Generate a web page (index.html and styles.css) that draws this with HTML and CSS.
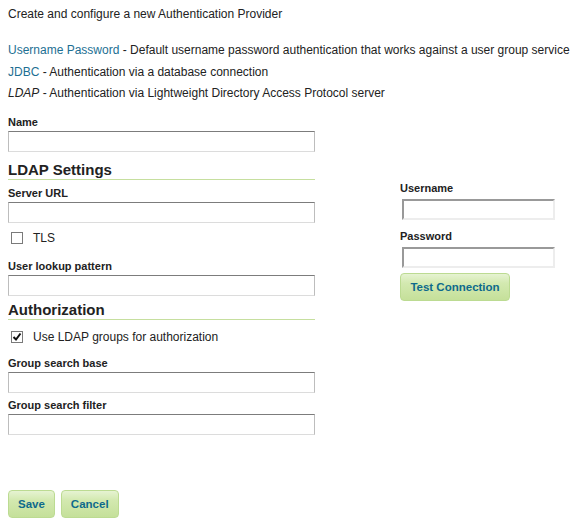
FILE: index.html
```html
<!DOCTYPE html>
<html>
<head>
<meta charset="utf-8">
<link rel="stylesheet" href="styles.css">
</head>
<body>
<div class="page">
  <p class="intro">Create and configure a new Authentication Provider</p>
  <ul class="providers">
    <li><a class="link">Username Password</a> - Default username password authentication that works against a user group service</li>
    <li><a class="link">JDBC</a> - Authentication via a database connection</li>
    <li><em>LDAP</em> - Authentication via Lightweight Directory Access Protocol server</li>
  </ul>

  <div class="field name-field">
    <label class="label">Name</label>
    <input class="text" type="text">
  </div>

  <div class="ldap-row">
    <div class="left-col">
      <h3 class="section">LDAP Settings</h3>
      <div class="field">
        <label class="label">Server URL</label>
        <input class="text" type="text">
      </div>
      <div class="check-row tls-row">
        <span class="box"></span>
        <span>TLS</span>
      </div>
      <div class="field">
        <label class="label">User lookup pattern</label>
        <input class="text" type="text">
      </div>
    </div>
    <div class="right-col">
      <label class="label">Username</label>
      <input class="inset" type="text">
      <label class="label pw-label">Password</label>
      <input class="inset" type="password">
      <button class="btn test-btn">Test Connection</button>
    </div>
  </div>

  <h3 class="section auth-head">Authorization</h3>
  <div class="check-row auth-row">
    <span class="box"><svg width="10" height="10" viewBox="0 0 10 10"><path d="M1.5 5 L4 7.5 L8.5 1.5" fill="none" stroke="#111" stroke-width="2"/></svg></span>
    <span>Use LDAP groups for authorization</span>
  </div>
  <div class="field">
    <label class="label">Group search base</label>
    <input class="text" type="text">
  </div>
  <div class="field">
    <label class="label">Group search filter</label>
    <input class="text" type="text">
  </div>

  <div class="actions">
    <button class="btn">Save</button>
    <button class="btn">Cancel</button>
  </div>
</div>
</body>
</html>
```

FILE: styles.css
```css
html, body {
  margin: 0;
  padding: 0;
  background: #fff;
}
.page {
  padding: 7px 8px 0 8px;
  font-family: "Liberation Sans", Arial, sans-serif;
  font-size: 12px;
  color: #222;
}
.intro {
  margin: 0;
  line-height: 14px;
}
.providers {
  list-style: none;
  margin: 19px 0 0 0;
  padding: 0;
  line-height: 21.5px;
  white-space: nowrap;
}
.link {
  color: #1d6f93;
  text-decoration: none;
}
.providers em {
  font-style: italic;
}
.field {
  display: flex;
  flex-direction: column;
  width: 307px;
}
.name-field {
  margin-top: 10px;
}
.label {
  display: block;
  font-weight: bold;
  font-size: 11px;
  line-height: 14px;
  color: #222;
  margin-bottom: 2px;
}
.text {
  box-sizing: border-box;
  width: 307px;
  height: 21px;
  margin: 0 0 5px 0;
  padding: 0 3px;
  border: 1px solid #bdbdbd;
  border-top-color: #7c7c7c;
  border-bottom-color: #dcdcdc;
  background: #fff;
  font: inherit;
}
.section {
  margin: 0;
  width: 307px;
  font-size: 15px;
  font-weight: bold;
  line-height: 18px;
  color: #222;
  border-bottom: 1px solid #c6df9f;
}
.ldap-row {
  display: flex;
  align-items: flex-start;
  gap: 85px;
  margin-top: 4px;
}
.left-col .section {
  margin-bottom: 6px;
}
.right-col {
  display: flex;
  flex-direction: column;
  align-items: flex-start;
  margin-top: 20px;
  width: 160px;
}
.inset {
  box-sizing: border-box;
  width: 153px;
  height: 21px;
  margin: 2px 0 9px 2px;
  padding: 0 3px;
  border: 2px solid #ededed;
  border-top-color: #999;
  border-left-color: #999;
  background: #fff;
  font: inherit;
}
.pw-label {
  margin-bottom: 2px;
}
.check-row {
  display: flex;
  align-items: center;
  height: 16px;
  gap: 10px;
  padding-left: 3px;
}
.tls-row {
  margin: 2px 0 13px 0;
}
.box {
  box-sizing: border-box;
  width: 12px;
  height: 12px;
  border: 1px solid #7a7a7a;
  background: #fff;
  display: flex;
  align-items: center;
  justify-content: center;
}
.auth-head {
  margin-top: 0;
}
.auth-row {
  margin: 9px 0 11px 0;
}
.btn {
  box-sizing: border-box;
  height: 28px;
  padding: 0 9px;
  border: 1px solid #bcdb92;
  border-radius: 4px;
  background: linear-gradient(#e6f3d2 0%, #d3e9b0 35%, #c5e09a 100%);
  color: #0e6a8c;
  font-family: "Liberation Sans", Arial, sans-serif;
  font-size: 11.5px;
  font-weight: bold;
  white-space: nowrap;
  cursor: pointer;
}
.test-btn {
  width: 110px;
  margin-top: -4px;
}
.actions {
  display: flex;
  gap: 6px;
  margin-top: 50px;
}
```
